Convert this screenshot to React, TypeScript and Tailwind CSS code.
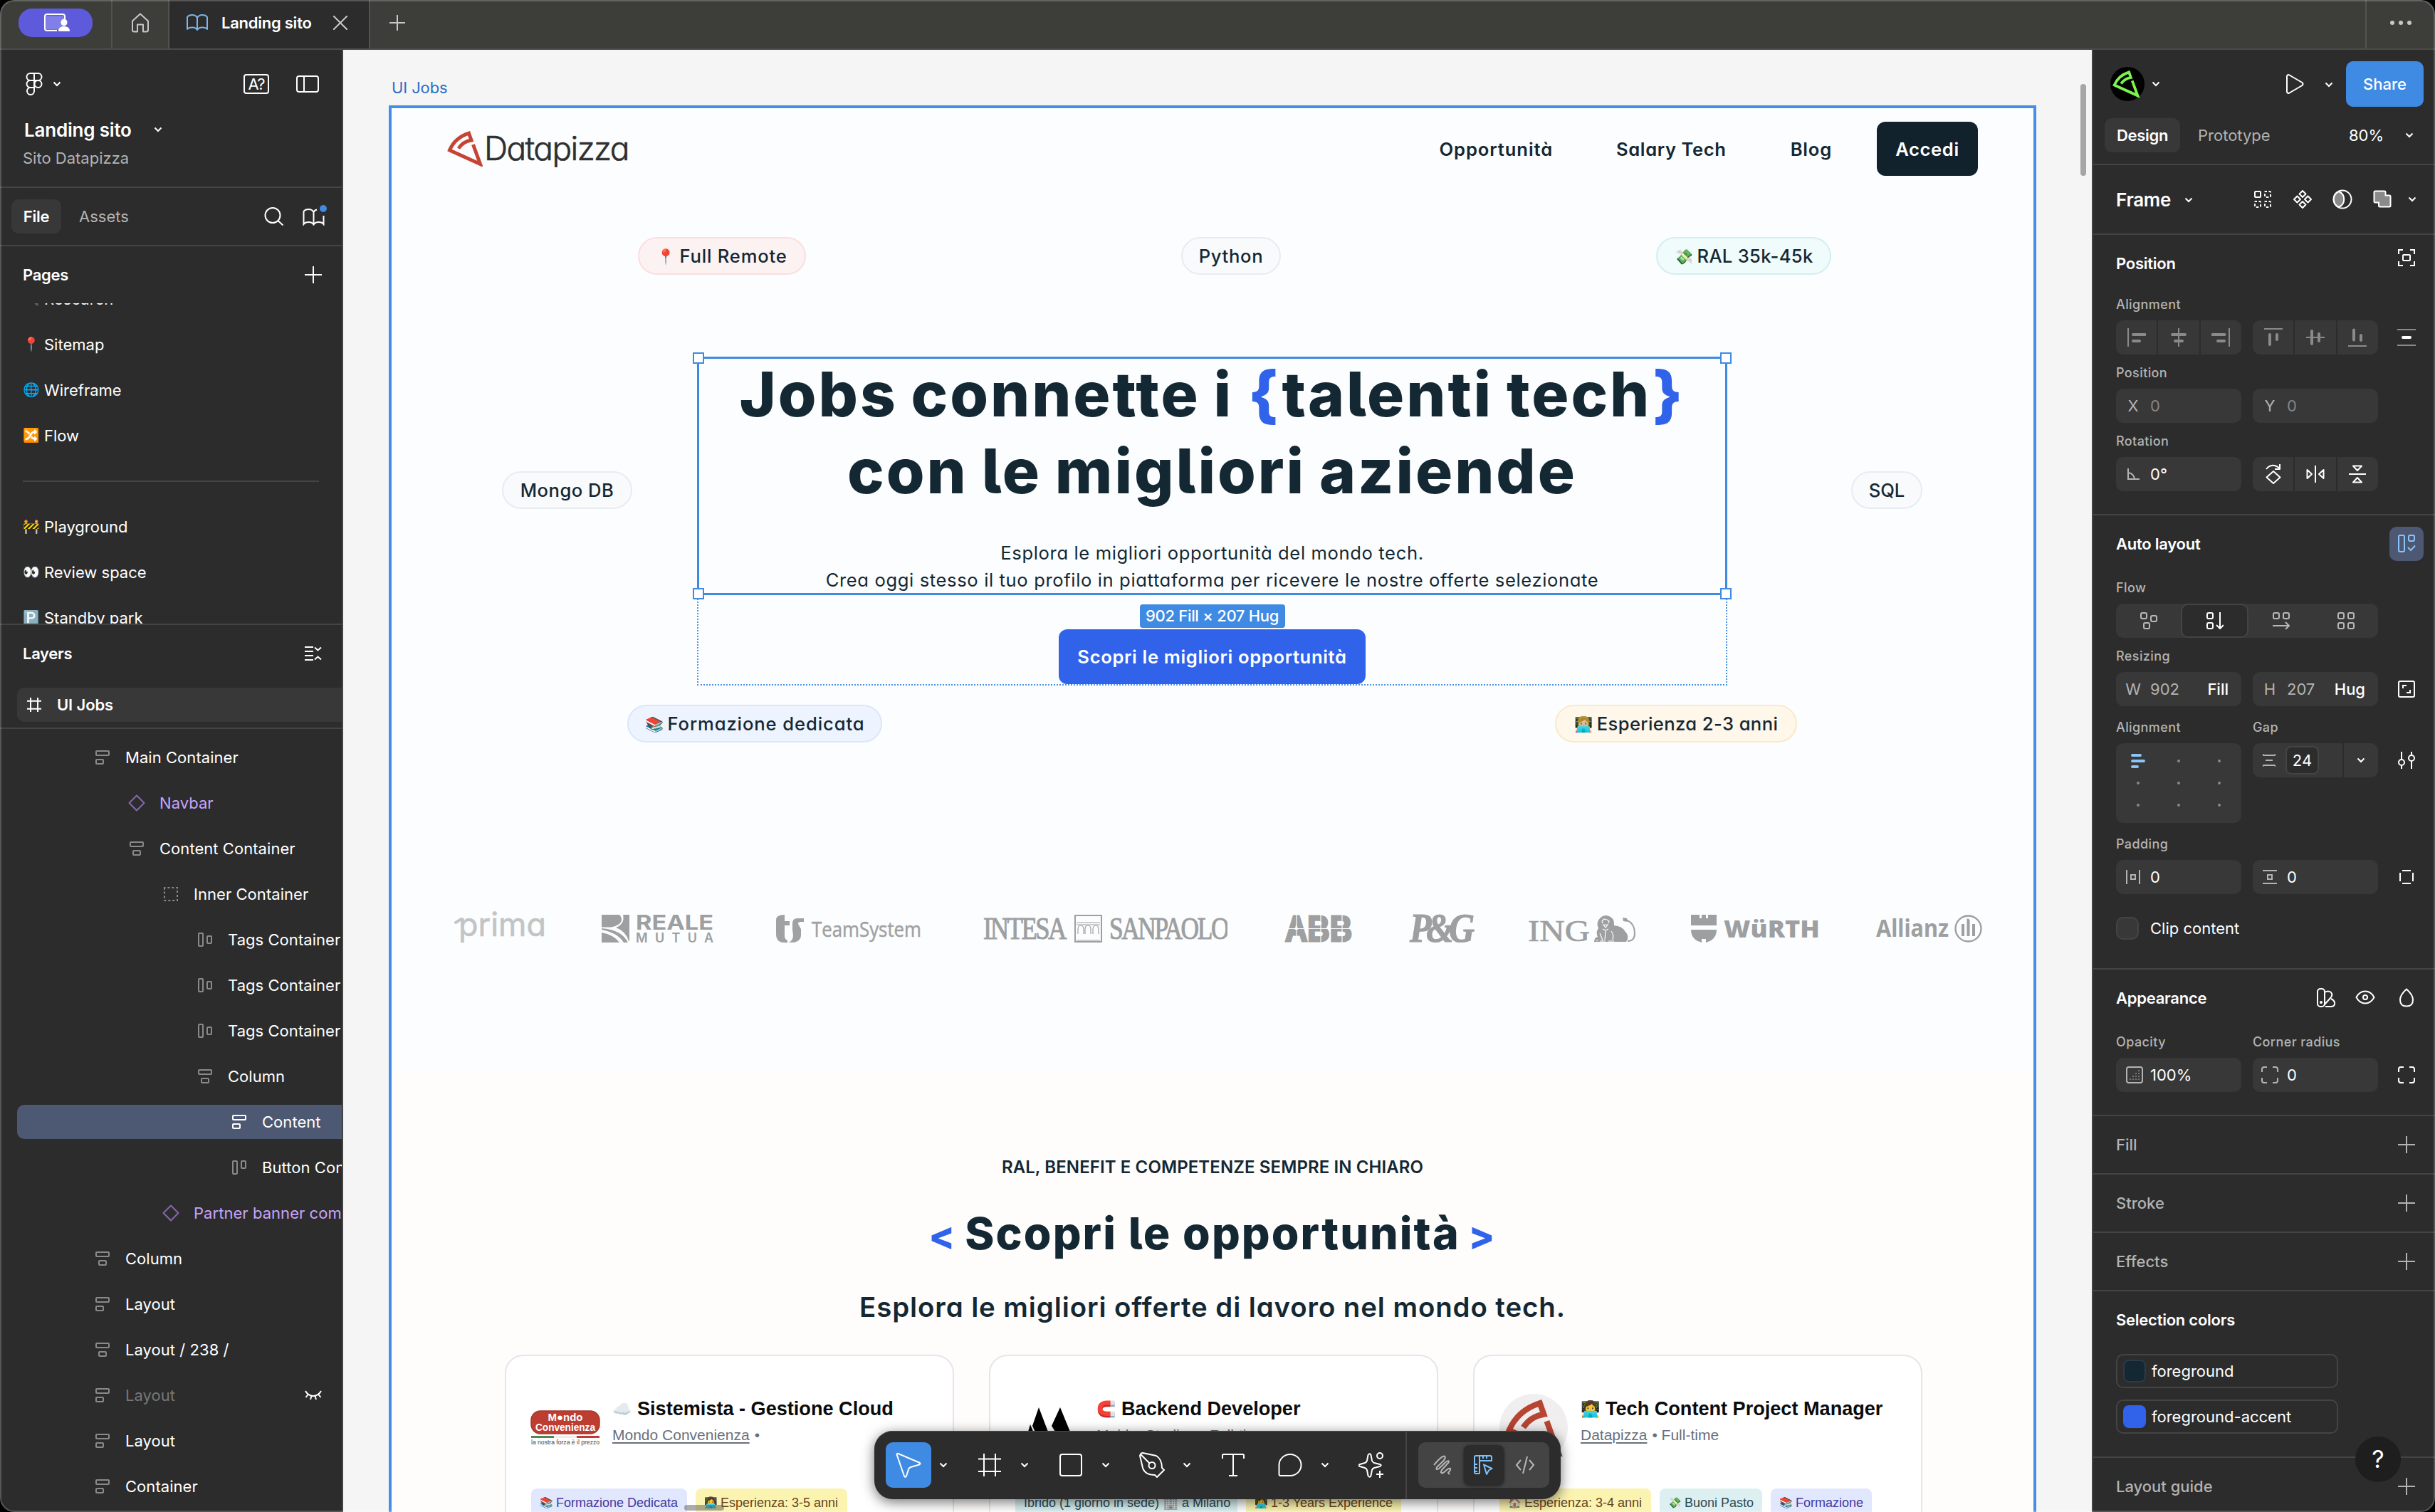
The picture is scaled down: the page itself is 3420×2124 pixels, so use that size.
import React from 'react';

type IconProps = { w: number; h: number; className?: string; sw?: number; children: React.ReactNode };

function Svg({ w, h, className = '', sw = 2, children }: IconProps) {
  return (
    <svg
      width={w}
      height={h}
      viewBox={`0 0 ${w} ${h}`}
      fill="none"
      stroke="currentColor"
      strokeWidth={sw}
      className={`shrink-0 ${className}`}
    >
      {children}
    </svg>
  );
}

const Chevron = ({ className = '' }: { className?: string }) => (
  <Svg w={12} h={8} className={className}>
    <path d="M1.5 1.5 6 6l4.5-4.5" />
  </Svg>
);

const Plus = ({ size = 24, className = '' }: { size?: number; className?: string }) => (
  <Svg w={size} h={size} className={className}>
    <path d={`M${size / 2} 0v${size}M0 ${size / 2}h${size}`} />
  </Svg>
);

const Hash = ({ size, className = '' }: { size: number; className?: string }) => (
  <svg width={size} height={size} viewBox="0 0 32 32" fill="none" stroke="currentColor" strokeWidth={size > 24 ? 2 : 3.2} className={`shrink-0 ${className}`}>
    <path d="M8 0v32M24 0v32M0 7.5h32M0 25h32" />
  </svg>
);

/* ---------------------------------------------------------------- top bar */

function TopBar() {
  return (
    <header className="flex h-[70px] shrink-0 items-stretch border-b-2 border-[#4b4b49] bg-[#3d3d3a] text-[#c8c8c6]">
      <div className="flex w-[156px] items-center pb-1 pl-[26px]">
        <div className="flex h-10 w-[104px] items-center justify-center rounded-[19px] bg-[#5d5bdc] text-white">
          <Svg w={38} h={26} className="ml-1">
            <rect x="3.5" y="3.5" width="25" height="19" fill="#8280e8" stroke="none" />
            <path d="M30 8V4q0-3-3-3H5Q2 1 2 4v17q0 3 3 3h14" />
            <ellipse cx="29" cy="12.500" rx="4.500" ry="5" fill="white" stroke="none" />
            <path d="M21 25q0-7 8-7t8 7z" fill="white" stroke="none" />
          </Svg>
        </div>
      </div>
      <div className="flex w-[82px] items-center justify-center border-x-2 border-[#52524f] pb-1">
        <Svg w={26} h={28}>
          <path d="M2 11.500 13 1.500l11 10V24q0 2.500-2.500 2.500H17v-10H9v10H4.500Q2 26.500 2 24z" strokeLinejoin="round" />
        </Svg>
      </div>
      <div className="flex w-[280px] items-center bg-[#2c2c2c] pb-1 pl-6">
        <Svg w={30} h={24} className="text-[#7fb5ec]">
          <path d="M15 5q-2-4-7-4T1 4v17q2-2.500 7-2.500t7 3.500q2-3.500 7-3.500t7 2.500V4q-2-3-7-3t-7 4zM15 5v17" strokeLinejoin="round" />
        </Svg>
        <span className="ml-[19px] text-[22px] font-semibold tracking-[-0.25px] text-white">Landing sito</span>
        <Svg w={20} h={20} className="ml-[30px]">
          <path d="M0 0l20 20M20 0 0 20" />
        </Svg>
      </div>
      <div className="flex flex-1 items-center border-l-2 border-[#52524f] pb-1 pl-[27px]">
        <Plus size={22} />
      </div>
      <div className="flex w-[98px] items-center gap-[6px] border-l-2 border-[#52524f] pb-1 pl-[33px]">
        <span className="size-[6px] rounded-full bg-[#c8c8c6]" />
        <span className="size-[6px] rounded-full bg-[#c8c8c6]" />
        <span className="size-[6px] rounded-full bg-[#c8c8c6]" />
      </div>
    </header>
  );
}

/* ----------------------------------------------------------- left sidebar */

type LayerKind = 'vleft' | 'vcenter' | 'hcenter' | 'htop' | 'group' | 'instance';

function LayerIcon({ kind }: { kind: LayerKind }) {
  if (kind === 'instance')
    return (
      <Svg w={24} h={24}>
        <path d="M12 1.500 22.500 12 12 22.500 1.500 12z" strokeLinejoin="round" />
      </Svg>
    );
  return (
    <Svg w={20} h={20}>
      {kind === 'vleft' && (<><rect x="1" y="1" width="18" height="6" rx="1" /><rect x="1" y="13" width="10" height="6" rx="1" /></>)}
      {kind === 'vcenter' && (<><rect x="1" y="1" width="18" height="6" rx="1" /><rect x="5" y="13" width="10" height="6" rx="1" /></>)}
      {kind === 'hcenter' && (<><rect x="1" y="1" width="6" height="18" rx="1" /><rect x="13" y="5" width="6" height="10" rx="1" /></>)}
      {kind === 'htop' && (<><rect x="1" y="1" width="6" height="18" rx="1" /><rect x="13" y="1" width="6" height="10" rx="1" /></>)}
      {kind === 'group' && <rect x="1" y="1" width="18" height="18" strokeDasharray="3 2.900" strokeDashoffset="1.500" />}
    </Svg>
  );
}

const INDENT = ['pl-[104px]', 'pl-[152px]', 'pl-[200px]', 'pl-[248px]', 'pl-[296px]'];

const LAYERS: { name: string; level: number; kind: LayerKind; selected?: boolean; hidden?: boolean }[] = [
  { name: 'Main Container', level: 0, kind: 'vleft' },
  { name: 'Navbar', level: 1, kind: 'instance' },
  { name: 'Content Container', level: 1, kind: 'vcenter' },
  { name: 'Inner Container', level: 2, kind: 'group' },
  { name: 'Tags Container', level: 3, kind: 'hcenter' },
  { name: 'Tags Container', level: 3, kind: 'hcenter' },
  { name: 'Tags Container', level: 3, kind: 'hcenter' },
  { name: 'Column', level: 3, kind: 'vcenter' },
  { name: 'Content', level: 4, kind: 'vleft', selected: true },
  { name: 'Button Container', level: 4, kind: 'htop' },
  { name: 'Partner banner component', level: 2, kind: 'instance' },
  { name: 'Column', level: 0, kind: 'vcenter' },
  { name: 'Layout', level: 0, kind: 'vleft' },
  { name: 'Layout / 238 /', level: 0, kind: 'vcenter' },
  { name: 'Layout', level: 0, kind: 'vleft', hidden: true },
  { name: 'Layout', level: 0, kind: 'vleft' },
  { name: 'Container', level: 0, kind: 'vleft' },
];

function Page({ emoji, name }: { emoji: string; name: string }) {
  return (
    <div className="flex h-16 items-center pl-8">
      <span className="w-[30px] text-[19px]">{emoji}</span>
      <span>{name}</span>
    </div>
  );
}

function LeftSidebar() {
  return (
    <aside className="flex w-[482px] shrink-0 flex-col overflow-hidden border-r-2 border-[#444] bg-[#2c2c2c] text-[22px] text-white">
      <div className="h-[194px] shrink-0 border-b-2 border-[#444] pt-6">
        <div className="flex h-12 items-center pl-9">
          <Svg w={24} h={32}>
            <path d="M12 1H6.500a5 5 0 0 0 0 10H12zM12 1h5.500a5 5 0 0 1 0 10H12zM12 11H6.500a5 5 0 0 0 0 10H12zM12 21H6.500a5 5 0 1 0 5.500 5z" />
            <circle cx="17.500" cy="16" r="5" />
          </Svg>
          <Chevron className="ml-[14px]" />
          <div className="ml-auto flex items-center pr-8">
            <div className="flex h-7 w-9 items-center justify-center rounded border-2 border-white text-[22px] leading-none tracking-[-1px]">A?</div>
            <Svg w={32} h={24} className="ml-[38px]">
              <rect x="1" y="1" width="30" height="22" rx="3" />
              <path d="M11 1v22" />
            </Svg>
          </div>
        </div>
        <div className="mt-4 flex h-12 items-center pl-[34px]">
          <span className="text-[26px] font-semibold tracking-[-0.2px]">Landing sito</span>
          <Chevron className="ml-[31px]" />
        </div>
        <div className="flex h-8 items-center pl-8 text-[#b3b3b3]">Sito Datapizza</div>
      </div>

      <div className="flex h-[82px] shrink-0 items-center border-b-2 border-[#444] pl-4 pr-6">
        <div className="flex h-12 w-[70px] items-center justify-center rounded-[10px] bg-[#383838] font-semibold tracking-[-0.3px]">File</div>
        <div className="ml-[25px] text-[#b3b3b3]">Assets</div>
        <Svg w={28} h={26} className="ml-auto">
          <circle cx="12" cy="11.500" r="10.500" />
          <path d="M19.500 19l7 6.500" />
        </Svg>
        <div className="relative ml-[26px] mt-[2px]">
          <Svg w={31} h={24}>
            <path d="M20 1.500q-3 .5-4.500 3.500Q13.500 1 8.500 1T1.500 4v18q2-3 7-3t7 3.500q2-3.500 7-3.500t7 3V10M15.500 5v17" />
          </Svg>
          <span className="absolute -right-[3px] -top-[5px] size-[10px] rounded-full bg-[#3f8ae2]" />
        </div>
      </div>

      <div className="flex h-20 shrink-0 items-center justify-between pl-8 pr-7">
        <span className="font-semibold tracking-[-0.3px]">Pages</span>
        <Plus />
      </div>
      <div className="h-[450px] shrink-0 overflow-hidden">
        <div className="-mt-[38px] flex flex-col">
          <Page emoji="🔍" name="Research" />
          <Page emoji="📍" name="Sitemap" />
          <Page emoji="🌐" name="Wireframe" />
          <Page emoji="🔀" name="Flow" />
          <div className="mx-8 flex h-16 items-center">
            <div className="h-[2px] w-full bg-[#444]" />
          </div>
          <Page emoji="🚧" name="Playground" />
          <Page emoji="👀" name="Review space" />
          <Page emoji="🅿️" name="Standby park" />
        </div>
      </div>

      <div className="shrink-0 border-y-2 border-[#444] pb-2">
        <div className="flex h-20 items-center justify-between pl-8 pr-7">
          <span className="font-semibold tracking-[-0.3px]">Layers</span>
          <Svg w={24} h={20}>
            <path d="M0 1h12M0 7h12M0 13h12M0 19h12M14 1.500l4.500 4 4.500-4M14 18.500l4.500-4 4.500 4" />
          </Svg>
        </div>
        <div className="ml-6 mt-2 flex h-12 items-center rounded-l-[10px] bg-[#383838] pl-[14px]">
          <Hash size={20} />
          <span className="ml-[22px] font-semibold tracking-[-0.1px]">UI Jobs</span>
        </div>
      </div>

      <div className="flex flex-col pt-2">
        {LAYERS.map((l, i) => (
          <div key={i} className="flex h-16 items-center pl-6">
            <div
              className={`flex h-12 min-w-0 flex-1 items-center overflow-hidden rounded-l-[10px] ${INDENT[l.level]} ${
                l.selected ? 'bg-[#4d5872]' : ''
              }`}
            >
              <span
                className={`flex w-8 shrink-0 justify-center ${
                  l.selected ? 'text-white' : l.kind === 'instance' ? 'text-[#8768ad]' : 'text-[#8a8a8a]'
                }`}
              >
                <LayerIcon kind={l.kind} />
              </span>
              <span
                className={`ml-4 whitespace-nowrap tracking-[0.05px] ${
                  l.kind === 'instance' ? 'text-[#c8a4f8]' : l.hidden ? 'text-[#777]' : 'text-white'
                }`}
              >
                {l.name}
              </span>
              {l.hidden && (
                <Svg w={24} h={14} className="ml-auto mr-7">
                  <path d="M1 1q4 7 11 7t11-7M5 5.500 1.500 10M9.500 8 8 13M14.500 8l1.500 5M19 5.500l3.500 4.500" />
                </Svg>
              )}
            </div>
          </div>
        ))}
      </div>
    </aside>
  );
}

/* ----------------------------------------------------------------- canvas */

/* Datapizza slice: outer crust, inner arc and the right edge. */
function Slice({ width, height, className = '', sw = 5 }: { width: number; height: number; className?: string; sw?: number }) {
  return (
    <svg width={width} height={height} viewBox="0 0 50 50" fill="none" stroke="currentColor" strokeWidth={sw} className={`shrink-0 ${className}`}>
      <path d="M16 24.500Q22 15 34 13L30.500 3.200Q11 9.500 3.500 27L46.500 46.500 36.500 19" strokeMiterlimit="8" />
    </svg>
  );
}

function Pill({ emoji, children, className }: { emoji?: string; children: string; className: string }) {
  return (
    <div className={`flex h-[53px] shrink-0 items-center justify-center rounded-full border-2 pt-[2px] text-[25.6px] font-medium ${className}`}>
      {emoji && <span className="mr-[6px] w-[26px] text-[21px]">{emoji}</span>}
      <span>{children}</span>
    </div>
  );
}

function Partners() {
  return (
    <div className="mt-[232px] flex h-[60px] items-center pl-[88px]">
      <svg width="129" height="42" viewBox="0 0 129 42" className="shrink-0 overflow-visible" fill="#c3c4c5" stroke="#c3c4c5">
        <text x="6" y="31" fontFamily="Inter" fontWeight="400" fontSize="46" textLength="123" lengthAdjust="spacingAndGlyphs" strokeWidth=".6" className="[font-feature-settings:'cv11']">prima</text>
        <path d="M2 12 10 7" strokeWidth="4" strokeLinecap="round" />
      </svg>
      <svg width="157" height="42" viewBox="0 0 157 42" fill="#9d9fa1" className="ml-[78px] shrink-0">
        <path d="M0 1h25q7 8-2 14-4 3-10 3.500H0zM30 1h9v37h-1Q34 24 20 19q13-5 10-18zM0 20q28 2 37 20h-6Q22 26 0 22zM0 26q17 3 25 14H0z" />
        <text x="48" y="22" fontFamily="Inter" fontWeight="700" fontSize="29" textLength="109" lengthAdjust="spacingAndGlyphs">REALE</text>
        <text x="48" y="40" fontFamily="Inter" fontWeight="600" fontSize="18" textLength="109">MUTUA</text>
      </svg>
      <svg width="204" height="42" viewBox="0 0 204 42" fill="#a0a1a1" className="ml-[88px] shrink-0">
        <path d="M12 1v9h7v6h-7v15q0 4 4 6v3Q0 42 0 28V8q0-7 12-7zM39 6v5h-5q-3 0-3 3l4 7v8q0 12-17 11 6-3 6-10l-1-8V13q0-7 7-7z" />
        <text x="50" y="32" fontFamily="Open Sans" fontSize="29" stroke="#a0a1a1" strokeWidth=".5" textLength="154" lengthAdjust="spacingAndGlyphs">TeamSystem</text>
      </svg>
      <svg width="343" height="42" viewBox="0 0 343 42" fill="#9d9fa1" stroke="#9d9fa1" strokeWidth="1" className="ml-[87px] shrink-0">
        <text x="0" y="35" fontFamily="Liberation Serif" fontSize="44" letterSpacing="-3" textLength="115" lengthAdjust="spacingAndGlyphs">INTESA</text>
        <g fill="none" strokeWidth="2"><rect x="129" y="2" width="37" height="37" /><path d="M131 12h33M131 15h33" strokeWidth="1" /><path d="M133 28v-6q0-6 4-6t4 6v6M143 28v-6q0-6 4-6t4 6v6M154 28v-6q0-6 4-6t4 6v6M131 37h33" strokeWidth="1.200" /></g>
        <text x="177" y="35" fontFamily="Liberation Serif" fontSize="44" letterSpacing="-3" textLength="166" lengthAdjust="spacingAndGlyphs">SANPAOLO</text>
      </svg>
      <svg width="95" height="42" viewBox="0 0 95 42" fill="#9d9fa1" stroke="#9d9fa1" strokeWidth="3" className="ml-20 shrink-0">
        <text x="1" y="38" fontFamily="Liberation Sans" fontWeight="700" fontSize="50" textLength="94" lengthAdjust="spacingAndGlyphs">ABB</text>
        <path d="M0 20.500h95M17 0v42M51 0v42M81 0v42" stroke="#fcfdfe" strokeWidth="1.200" />
      </svg>
      <svg width="88" height="42" viewBox="0 0 88 42" fill="#9d9fa1" stroke="#9d9fa1" strokeWidth="1.200" className="ml-20 shrink-0 overflow-visible">
        <text x="1" y="39" fontFamily="Liberation Serif" fontStyle="italic" fontWeight="700" fontSize="56" letterSpacing="-8" textLength="84" lengthAdjust="spacingAndGlyphs">P&amp;G</text>
      </svg>
      <svg width="152" height="42" viewBox="0 0 152 42" fill="#9d9fa1" className="ml-[79px] shrink-0 overflow-visible">
        <text x="0" y="38" fontFamily="Liberation Serif" fontSize="42" stroke="#9d9fa1" strokeWidth=".6" textLength="87" lengthAdjust="spacingAndGlyphs">ING</text>
        <path d="M93 39q0-6 5-7-3-7 1-12-4-9 3-15 5-5 12-2 8 3 7 13 12 1 16 9 4 4 3 10l-2 4z" />
        <path d="M137 8q13 4 13 19 0 11-10 11" fill="none" stroke="#9d9fa1" strokeWidth="2" />
        <path d="m133 5 6 1 1 5-6-1z" />
        <path d="M104 10l3-3 4 1 3 2-1 3M104 10l1 3M106 15h6l-3 4zM105 21l4 2 4-2M101 27l4 10M109 24l-1 12M117 24q4 5 2 12M96 37h2M101 38h8M113 38h8" fill="none" stroke="#fcfdfe" strokeWidth="1.200" />
      </svg>
      <svg width="181" height="42" viewBox="0 0 181 42" fill="#9d9fa1" className="ml-[77px] shrink-0">
        <path d="M0 1h12v5h3V1h6v5h3V1h12v15H0zM0 22h36q0 14-15 18v-5h-6v5Q0 36 0 22z" />
        <text x="46" y="33" fontFamily="Open Sans" fontWeight="800" fontSize="34" textLength="135" lengthAdjust="spacingAndGlyphs">WüRTH</text>
      </svg>
      <svg width="149" height="42" viewBox="0 0 149 42" fill="#9d9fa1" className="ml-[79px] shrink-0">
        <text x="0" y="32" fontFamily="Noto Sans" fontWeight="700" fontSize="34" textLength="102" lengthAdjust="spacingAndGlyphs">Allianz</text>
        <circle cx="129.500" cy="20.500" r="18" fill="none" stroke="#9d9fa1" strokeWidth="2.400" />
        <path d="M122 14v17M129.500 8v23M127.500 8.500h3M137 14v17" fill="none" stroke="#9d9fa1" strokeWidth="4" />
      </svg>
    </div>
  );
}

function Handle({ className }: { className: string }) {
  return <span className={`absolute size-4 border-2 border-[#3f8ae2] bg-white ${className}`} />;
}

function Tag({ emoji, children, className }: { emoji?: string; children: string; className: string }) {
  return (
    <div className={`flex h-10 items-center whitespace-nowrap rounded-lg pl-3 text-[18px] ${className}`}>
      {emoji && <span className="mr-[3px] w-5 text-[15px]">{emoji}</span>}
      <span>{children}</span>
    </div>
  );
}

function JobCard({
  logo, emoji, title, company, suffix, children,
}: { logo: React.ReactNode; emoji: string; title: string; company: string; suffix: string; children: React.ReactNode }) {
  return (
    <article className="h-[420px] w-[631px] shrink-0 rounded-[26px] border-2 border-[#e5e5ea] bg-white px-[35px] pt-[53px] font-['Liberation_Sans',sans-serif]">
      <div className="flex h-24">
        <div className="flex h-24 w-24 shrink-0 items-center justify-center">{logo}</div>
        <div className="ml-[18px] pt-[4px]">
          <div className="flex h-[34px] items-center whitespace-nowrap text-[27.100px] font-bold text-[#0b0b0c]">
            <span className="mr-[7px] w-7 text-[22px]">{emoji}</span>
            {title}
          </div>
          <div className="mt-[3px] flex h-[34px] items-center whitespace-nowrap text-[21px] text-[#696f7d]">
            <span className="underline underline-offset-[3px]">{company}</span>
            <span className="ml-[7px]">{suffix}</span>
          </div>
        </div>
      </div>
      <div className="mt-[37px] flex gap-3">{children}</div>
    </article>
  );
}

function Frame() {
  return (
    <div className="absolute left-16 top-[78px] w-[2314px] border-4 border-[#438fe6] bg-[#fcfdfe] text-[#142833] [font-feature-settings:'cv11']">
      <section className="h-[1352px]">
        <nav className="flex h-[95px] items-center pl-[78px] pr-[78px] pt-[19px] text-[25.6px] font-semibold">
          <Slice width={50} height={50} className="text-[#c64434]" />
          <span className="ml-[2px] mt-[-2px] text-[46px] font-light leading-none tracking-[-1.6px] text-[#2e3030] [-webkit-text-stroke:0.6px_#2e3030]">Datapizza</span>
          <span className="ml-auto pt-[2px] tracking-[0.9px]">Opportunità</span>
          <span className="ml-[89px] pt-[2px] tracking-[0.6px]">Salary Tech</span>
          <span className="ml-[90px] pt-[2px] tracking-[0.8px]">Blog</span>
          <span className="ml-[63px] flex h-[76px] w-[142px] items-center justify-center rounded-xl bg-[#12222d] pt-[2px] tracking-[0.6px] text-white">Accedi</span>
        </nav>

        <div className="mt-[86px] flex justify-between pl-[346px] pr-[284px]">
          <Pill emoji="📍" className="w-[236px] border-[#f9dfe0] bg-[#fdf2f2] tracking-[0.8px]">Full Remote</Pill>
          <Pill className="w-[140px] border-[#e8ecf1] bg-[#f8fafc] tracking-[0.7px]">Python</Pill>
          <Pill emoji="💸" className="w-[246px] border-[#d3eff0] bg-[#f0fbfb] tracking-[0.3px]">RAL 35k-45k</Pill>
        </div>

        <div className="mt-[115px] flex pl-[155px]">
          <Pill className="mt-[161px] w-[183px] border-[#e8ecf1] bg-[#f8fafc] tracking-[0.5px]">Mongo DB</Pill>
          <div className="relative ml-[91px] flex h-[462px] w-[1447px] flex-col items-center border-2 border-dotted border-[#4b93e6]">
            <div className="absolute -inset-x-[2px] -top-[2px] h-[335px] border-[3px] border-[#3f8ae2]">
              <Handle className="-left-[9px] -top-[9px]" />
              <Handle className="-right-[9px] -top-[9px]" />
              <Handle className="-bottom-[9px] -left-[9px]" />
              <Handle className="-bottom-[9px] -right-[9px]" />
            </div>
            <h1 className="-mt-[3px] whitespace-nowrap text-center text-[87px] font-extrabold leading-[107.500px] tracking-[2.9px] [font-feature-settings:'cv05'] [word-spacing:-3px]">
              Jobs connette i <span className="pl-[2px] tracking-[5px] text-[#3063e9]">{'{'}</span>talenti tech<span className="pl-[2px] text-[#3063e9]">{'}'}</span>
              <br />
              con le migliori aziende
            </h1>
            <p className="mt-[43px] whitespace-nowrap text-center text-[25.6px] leading-[38.400px] tracking-[0.62px]">
              Esplora le migliori opportunità del mondo tech.
              <br />
              Crea oggi stesso il tuo profilo in piattaforma per ricevere le nostre offerte selezionate
            </p>
            <div className="mt-[14px] flex h-[34px] w-[204px] items-center justify-center rounded bg-[#3f8ae2] text-[22px] font-medium tracking-[-0.3px] text-white [font-feature-settings:normal]">
              902 Fill × 207 Hug
            </div>
            <div className="mt-[2px] flex h-[77px] w-[431px] shrink-0 items-center justify-center rounded-xl bg-[#3063e9] pt-[2px] text-[25.6px] font-semibold tracking-[0.65px] text-white">
              Scopri le migliori opportunità
            </div>
          </div>
          <Pill className="ml-[174px] mt-[161px] w-[100px] border-[#e8ecf1] bg-[#f8fafc]">SQL</Pill>
        </div>

        <div className="mt-[27px] flex justify-between pl-[331px] pr-[332px]">
          <Pill emoji="📚" className="w-[358px] border-[#dbe6fb] bg-[#eef4ff] tracking-[0.9px]">Formazione dedicata</Pill>
          <Pill emoji="👩🏼‍💻" className="w-[340px] border-[#fbe9c9] bg-[#fff7ea] tracking-[0.4px]">Esperienza 2-3 anni</Pill>
        </div>

        <Partners />
      </section>

      <section className="flex flex-col items-center bg-[#fefdfc] pt-[118px]">
        <p className="h-9 text-[24px] font-semibold leading-9 tracking-[0.1px]">RAL, BENEFIT E COMPETENZE SEMPRE IN CHIARO</p>
        <h2 className="mt-[34px] h-20 whitespace-nowrap text-[62.500px] font-extrabold leading-[80px] tracking-[2.1px] [font-feature-settings:'cv05']">
          <span className="-mr-[4px] text-[54px] text-[#3063e9]">&lt;</span> Scopri le opportunità <span className="-ml-[4px] text-[54px] text-[#3063e9]">&gt;</span>
        </h2>
        <p className="mt-9 h-14 text-[38.400px] font-semibold leading-[56px] tracking-[0.92px]">Esplora le migliori offerte di lavoro nel mondo tech.</p>
        <div className="mt-[39px] flex w-full gap-[49px] pl-[159px] [font-feature-settings:normal]">
          <JobCard
            emoji="☁️" title="Sistemista - Gestione Cloud" company="Mondo Convenienza" suffix="•"
            logo={
              <svg width="98" height="50" viewBox="0 0 98 50" className="shrink-0">
                <rect x="1" y="1" width="96" height="32" rx="13" fill="#bd3d31" stroke="#a33a30" strokeWidth="1.500" />
                <g fontFamily="Liberation Sans" fontWeight="700" fill="#fff" textAnchor="middle">
                  <text x="49" y="15" fontSize="15">M●ndo</text>
                  <text x="49" y="28.500" fontSize="15" textLength="84" lengthAdjust="spacingAndGlyphs">Convenienza</text>
                  <text x="49" y="48" fontSize="9" fontWeight="400" fill="#444" textLength="96" lengthAdjust="spacingAndGlyphs">la nostra forza è il prezzo</text>
                </g>
                <path d="M1 37.500h32" stroke="#4f8a52" strokeWidth="3" />
                <path d="M33 37.500h32" stroke="#eee" strokeWidth="3" />
                <path d="M65 37.500h32" stroke="#bd3d31" strokeWidth="3" />
              </svg>
            }
          >
            <Tag emoji="📚" className="w-[219px] bg-[#e1e7fd] text-[#4338a0]">Formazione Dedicata</Tag>
            <Tag emoji="👩‍💻" className="w-[213px] bg-[#fbf3b0] text-[#66431f]">Esperienza: 3-5 anni</Tag>
          </JobCard>
          <JobCard
            emoji="🧲" title="Backend Developer" company="Mohka Studios" suffix="• Full-time"
            logo={
              <svg width="66" height="58" viewBox="0 0 66 58" className="shrink-0">
                <path d="M18 0 40 58H24L9 26ZM48 0 66 44v14H56L36 26ZM6 24 20 58H-4Z" />
              </svg>
            }
          >
            <Tag className="w-[312px] bg-[#d8efef] text-[#2c4a52]">Ibrido (1 giorno in sede) 🏢 a Milano</Tag>
            <Tag emoji="👩‍💻" className="w-[218px] bg-[#fbf3b0] text-[#66431f]">1-3 Years Experience</Tag>
          </JobCard>
          <JobCard
            emoji="👩‍💻" title="Tech Content Project Manager" company="Datapizza" suffix="• Full-time"
            logo={
              <div className="flex size-24 items-center justify-center rounded-full bg-[#f0eeef]">
                <Slice width={88} height={80} sw={5} className="text-[#b84432]" />
              </div>
            }
          >
            <Tag emoji="🏠" className="w-[213px] bg-[#fbf3b0] text-[#66431f]">Esperienza: 3-4 anni</Tag>
            <Tag emoji="💸" className="w-[144px] bg-[#dcf0f2] text-[#2c4a52]">Buoni Pasto</Tag>
            <Tag emoji="📚" className="w-[142px] bg-[#e1e7fd] text-[#4338a0]">Formazione</Tag>
          </JobCard>
        </div>
      </section>
    </div>
  );
}

function ToolButton({ children, active = false }: { children: React.ReactNode; active?: boolean }) {
  return <div className={`flex size-16 items-center justify-center rounded-[10px] ${active ? 'bg-[#3f8ae2]' : ''}`}>{children}</div>;
}

function ToolChevron() {
  return (
    <div className="mr-4 flex w-[34px] items-center justify-center">
      <Chevron />
    </div>
  );
}

function Toolbar() {
  return (
    <div className="absolute left-[746px] top-[1940px] flex h-24 w-[964px] items-center rounded-[26px] bg-[#2c2c2c] pl-4 text-white shadow-[0_4px_18px_rgba(0,0,0,0.55),inset_0_1px_0_#4a4a4a]">
      <ToolButton active>
        <Svg w={36} h={36}>
          <path d="M3.500 2 33 14.500q3 1.600 0 3L21 21q-2 .7-2.800 2.500L15 33.500q-1.400 2.700-3 0L1.800 4Q1.200 1 3.500 2z" strokeLinejoin="round" />
        </Svg>
      </ToolButton>
      <ToolChevron />
      <ToolButton><Hash size={32} /></ToolButton>
      <ToolChevron />
      <ToolButton>
        <Svg w={32} h={32}><rect x="1" y="1" width="30" height="30" rx="3" /></Svg>
      </ToolButton>
      <ToolChevron />
      <ToolButton>
        <Svg w={38} h={36}>
          <path d="M2 5q1-4 4-4l19 4q8 5 8 17l3 3-10 10-3-3Q9 32 6 22zM3 3l13 13" strokeLinejoin="round" />
          <circle cx="19" cy="18.500" r="4.500" />
        </Svg>
      </ToolButton>
      <ToolChevron />
      <ToolButton>
        <Svg w={32} h={32}><path d="M1 7V2.500Q1 1 2.500 1h27Q31 1 31 2.500V7M16 1v30M10 31h12" /></Svg>
      </ToolButton>
      <div className="w-4" />
      <ToolButton>
        <Svg w={34} h={32}><path d="M1.500 29V16a15.500 15 0 1 1 15.500 15H3.500q-2 0-2-2z" /></Svg>
      </ToolButton>
      <ToolChevron />
      <ToolButton>
        <Svg w={36} h={36}>
          <path d="M13.500 4q2.500-3.500 4 0l1.500 8q.8 2 3 3l8 2q3.500 1 0 3l-8 2q-2 .8-3 3l-1.500 8q-1.500 3.500-4 0l-1.500-8q-.8-2-3-3l-7-2q-3.500-1.500 0-3l7-2q2-.8 3-3z" />
          <circle cx="30" cy="5" r="4" />
          <path d="M30 26v10M25 31h10" />
        </Svg>
      </ToolButton>
      <div className="ml-4 h-24 w-[2px] bg-[#444]" />
      <div className="ml-4 flex h-16 w-[184px] items-center rounded-[10px] bg-[#444] p-1 text-[#b8b8b8]">
        <div className="flex flex-1 justify-center">
          <Svg w={27} h={28}>
            <path d="M1 14Q11 2 15 1.500q4 1-1 7L5 17q-2 5 3 2L18 9.500q5-3 3.500 1L12 21q-3 5 2 4l6-5q5-3 4 1l-3 4 2 2" strokeLinejoin="round" />
          </Svg>
        </div>
        <div className="flex h-14 w-14 items-center justify-center rounded-lg bg-[#2c2c2c] text-[#7cc0fb] shadow-[0_1px_4px_rgba(0,0,0,0.6)]">
          <Svg w={28} h={28}>
            <path d="M8 26H3q-2 0-2-2V3q0-2 2-2h20q2 0 2 2v5H8v18M8 8V1M13 2v3M18 2v3M2 13h3M2 18h3M2 23h3" strokeLinejoin="round" />
            <path d="M14 13.500l11.500 5.500-4.500 2.500-3 5.500z" strokeLinejoin="round" />
          </Svg>
        </div>
        <div className="flex flex-1 justify-center">
          <Svg w={28} h={24}><path d="M8 5 2 12l6 7M20 5l6 7-6 7M17 0l-6 24" /></Svg>
        </div>
      </div>
    </div>
  );
}

function Canvas() {
  return (
    <main className="relative min-w-0 flex-1 overflow-hidden bg-[#f5f5f5]">
      <div className="absolute left-[68px] top-[39px] text-[22px] leading-[28px] tracking-[-0.1px] text-[#2f6fc4]">UI Jobs</div>
      <Frame />
      <div className="absolute right-2 top-12 h-[129px] w-2 rounded-full bg-[#a6a6a6]" />
      <div className="absolute left-[479px] top-[2044px] h-2 w-14 rounded-full bg-[#5a5a5a]/50" />
      <Toolbar />
    </main>
  );
}

/* ---------------------------------------------------------- right sidebar */

function Label({ children, className = 'h-12 pt-[3px]' }: { children: string; className?: string }) {
  return <div className={`flex w-[192px] items-center text-[18px] font-medium tracking-[0.4px] text-[#b3b3b3] ${className}`}>{children}</div>;
}

function Title({ children, icons, className = 'h-[76px] pt-1' }: { children: string; icons?: React.ReactNode; className?: string }) {
  return (
    <div className={`flex items-center justify-between ${className}`}>
      <span className="font-semibold tracking-[-0.25px]">{children}</span>
      {icons}
    </div>
  );
}

function Field({ icon, value, suffix, muted }: { icon: React.ReactNode; value: string; suffix?: string; muted?: string }) {
  return (
    <div className="flex h-12 w-44 items-center rounded-[10px] bg-[#383838]">
      <span className="flex w-12 shrink-0 justify-center text-[#b3b3b3]">{icon}</span>
      <span className={muted ?? 'text-white'}>{value}</span>
      {suffix && <span className="ml-auto pr-[18px] font-medium">{suffix}</span>}
    </div>
  );
}

function Segments({ items, className = '' }: { items: React.ReactNode[]; className?: string }) {
  return (
    <div className={`flex h-12 w-44 gap-[2px] overflow-hidden rounded-[10px] ${className}`}>
      {items.map((it, i) => (
        <div key={i} className="flex flex-1 items-center justify-center bg-[#383838]">{it}</div>
      ))}
    </div>
  );
}

const Side = ({ children }: { children: React.ReactNode }) => <div className="flex size-12 items-center justify-center">{children}</div>;

const Corners = () => (
  <Svg w={24} h={24}>
    <path d="M8 1H4Q1 1 1 4v4M16 1h4q3 0 3 3v4M8 23H4q-3 0-3-3v-4M16 23h4q3 0 3-3v-4" />
  </Svg>
);

function AddRow({ children }: { children: string }) {
  return (
    <div className="flex h-[82px] items-center justify-between border-b-2 border-[#444] pl-8 pr-7 text-[#b3b3b3]">
      <span className="font-medium">{children}</span>
      <Plus />
    </div>
  );
}

function RightSidebar() {
  return (
    <aside className="relative flex w-[482px] shrink-0 flex-col overflow-hidden border-l-2 border-[#444] bg-[#2c2c2c] text-[22px] text-white">
      <div className="h-[162px] shrink-0 border-b-2 border-[#444] pt-4">
        <div className="flex h-16 items-center pl-6 pr-4">
          <div className="flex size-12 items-center justify-center rounded-full bg-black">
            <Slice width={38} height={40} className="-ml-1 text-[#7bf54b]" />
          </div>
          <Chevron className="ml-[10px]" />
          <Svg w={26} h={28} className="ml-auto">
            <path d="M2 3.500q0-3.500 3.500-2l18 10.500q2 2 0 4l-18 10.500q-3.500 1.500-3.500-2z" strokeLinejoin="round" />
          </Svg>
          <Chevron className="ml-[29px] mt-[2px]" />
          <div className="ml-[18px] flex h-16 w-[109px] items-center justify-center rounded-[10px] bg-[#3f8ae2] font-medium">Share</div>
        </div>
        <div className="mt-4 flex h-12 items-center pl-4 pr-[30px]">
          <div className="flex h-12 w-[106px] items-center justify-center rounded-[10px] bg-[#383838] font-semibold tracking-[-0.3px]">Design</div>
          <span className="ml-[25px] text-[#b3b3b3]">Prototype</span>
          <span className="ml-auto">80%</span>
          <Chevron className="ml-[30px]" />
        </div>
      </div>

      <div className="flex h-[98px] shrink-0 items-center border-b-2 border-[#444] pl-8 pr-[26px]">
        <span className="text-[26px] font-semibold tracking-[-0.3px]">Frame</span>
        <Chevron className="ml-[19px] mt-[2px]" />
        <Svg w={24} h={24} className="ml-auto">
          <rect x="1" y="1" width="8" height="8" rx="1" />
          <g strokeDasharray="3.500 2.500" strokeDashoffset="1.500"><rect x="15" y="1" width="8" height="8" rx="1" /><rect x="1" y="15" width="8" height="8" rx="1" /><rect x="15" y="15" width="8" height="8" rx="1" /></g>
        </Svg>
        <Svg w={28} h={28} className="ml-[30px]">
          <path d="m14 2 4.500 4.500L14 11 9.500 6.500zM14 17l4.500 4.500L14 26l-4.500-4.500zM6.500 9.500 11 14l-4.500 4.500L2 14zM21.500 9.500 26 14l-4.500 4.500L17 14z" strokeLinejoin="round" />
        </Svg>
        <Svg w={28} h={28} className="ml-7">
          <circle cx="14" cy="14" r="12.500" />
          <path d="M9 3a12 12 0 0 1 0 22A12 12 0 0 1 9 3z" fill="#8a8a8a" />
        </Svg>
        <Svg w={26} h={26} className="ml-[29px]">
          <path d="M1.500 3q0-1.500 1.500-1.500h13q1.500 0 1.500 1.500v4.500H23q1.500 0 1.500 1.500v13q0 1.500-1.500 1.500H9.500q-1.500 0-1.500-1.500v-4.500H3q-1.500 0-1.500-1.500z" fill="#8a8a8a" />
        </Svg>
        <Chevron className="ml-[23px]" />
      </div>

      <div className="h-[394px] shrink-0 border-b-2 border-[#444] pl-8 pr-4">
        <Title
          className="h-[72px] pt-2"
          icons={
            <div className="-mt-4 mr-3">
              <Svg w={24} h={24}>
                <path d="M1 7V1h6M17 1h6v6M1 17v6h6M23 17v6h-6" />
                <rect x="7" y="8" width="10" height="8" rx="1" />
              </Svg>
            </div>
          }
        >
          Position
        </Title>
        <Label>Alignment</Label>
        <div className="flex gap-4">
          <Segments
            className="text-[#8a8a8a]"
            items={[
              <Svg w={26} h={26}><path d="M1 0v26" /><path d="M8 9h17M8 18h9" strokeWidth="4" strokeLinecap="round" /></Svg>,
              <Svg w={24} h={26}><path d="M12 0v26" /><path d="M3 9h18M7 18h10" strokeWidth="4" strokeLinecap="round" /></Svg>,
              <Svg w={26} h={26}><path d="M25 0v26" /><path d="M1.500 9h17M9 18h9" strokeWidth="4" strokeLinecap="round" /></Svg>,
            ]}
          />
          <Segments
            className="text-[#8a8a8a]"
            items={[
              <Svg w={26} h={26}><path d="M0 1h26" /><path d="M8 9v14M18 9v7" strokeWidth="4" strokeLinecap="round" /></Svg>,
              <Svg w={26} h={26}><path d="M0 13h26" /><path d="M8 4v18M18 8v10" strokeWidth="4" strokeLinecap="round" /></Svg>,
              <Svg w={26} h={26}><path d="M0 25h26" /><path d="M8 2.500v14M18 10v7" strokeWidth="4" strokeLinecap="round" /></Svg>,
            ]}
          />
          <Side>
            <Svg w={26} h={24}>
              <path d="M0 1h26M0 23h26" stroke="#8a8a8a" />
              <path d="M8 12h10" strokeWidth="4" strokeLinecap="round" />
            </Svg>
          </Side>
        </div>
        <Label>Position</Label>
        <div className="flex gap-4">
          <Field icon="X" value="0" muted="text-[#858585]" />
          <Field icon="Y" value="0" muted="text-[#858585]" />
        </div>
        <Label>Rotation</Label>
        <div className="flex gap-4">
          <Field icon={<Svg w={18} h={18}><path d="M2 1v15h16M2 7q8 1 9 9" /></Svg>} value="0°" />
          <Segments
            items={[
              <Svg w={26} h={30}><path d="m13 11 9.500 8.500L13 28l-9.500-8.500zM3 8Q11-2 22 7M22 1v7h-7" strokeLinejoin="round" /></Svg>,
              <Svg w={26} h={24}><path d="M13 0v24M1.500 6v12L8 12zM24.500 6v12L18 12z" strokeLinejoin="round" /></Svg>,
              <Svg w={24} h={26}><path d="M0 13h24M6 1.500h12L12 8zM6 24.500h12L12 18z" strokeLinejoin="round" /></Svg>,
            ]}
          />
        </div>
      </div>

      <div className="h-[638px] shrink-0 border-b-2 border-[#444] pl-8 pr-4">
        <Title
          icons={
            <div className="flex size-12 items-center justify-center rounded-[10px] bg-[#4d5872] text-[#8ac4f8]">
              <Svg w={26} h={26}>
                <rect x="2" y="1" width="8" height="23" rx="2" />
                <rect x="16" y="1" width="8" height="8" rx="2" />
                <path d="M15 18l4 4 6-6.500" />
              </Svg>
            </div>
          }
        >
          Auto layout
        </Title>
        <Label>Flow</Label>
        <div className="flex h-12 w-[368px] rounded-[10px] bg-[#383838] text-[#b8b8b8]">
          <div className="flex flex-1 items-center justify-center"><Svg w={24} h={24}><rect x="1" y="1" width="8" height="8" rx="2" /><rect x="15" y="5" width="8" height="8" rx="2" /><rect x="5" y="15" width="8" height="8" rx="2" /></Svg></div>
          <div className="flex flex-1 items-center justify-center rounded-[10px] border-2 border-[#444] bg-[#2c2c2c] text-white"><Svg w={24} h={24}><rect x="1" y="1" width="8" height="8" rx="2" /><rect x="1" y="15" width="8" height="8" rx="2" /><path d="M19 0v23M14 18l5 5 5-5" /></Svg></div>
          <div className="flex flex-1 items-center justify-center"><Svg w={24} h={24}><rect x="1" y="1" width="8" height="8" rx="2" /><rect x="15" y="1" width="8" height="8" rx="2" /><path d="M0 19h23M18 14l5 5-5 5" /></Svg></div>
          <div className="flex flex-1 items-center justify-center"><Svg w={24} h={24}><rect x="1" y="1" width="8" height="8" rx="2" /><rect x="15" y="1" width="8" height="8" rx="2" /><rect x="1" y="15" width="8" height="8" rx="2" /><rect x="15" y="15" width="8" height="8" rx="2" /></Svg></div>
        </div>
        <Label>Resizing</Label>
        <div className="flex gap-4">
          <Field icon="W" value="902" suffix="Fill" muted="text-[#b3b3b3]" />
          <Field icon="H" value="207" suffix="Hug" muted="text-[#b3b3b3]" />
          <Side><Svg w={24} h={24}><rect x="1" y="1" width="22" height="22" rx="2" /><path d="M7 11V7h5M17 13v4h-5" /></Svg></Side>
        </div>
        <div className="flex">
          <Label className="h-[52px] pt-[6px]">Alignment</Label>
          <Label className="h-[52px] pt-[6px]">Gap</Label>
        </div>
        <div className="flex gap-4">
          <div className="grid h-28 w-44 grid-cols-3 grid-rows-3 items-center justify-items-center rounded-[10px] bg-[#383838] px-[2px] py-[10px]">
            <Svg w={20} h={20} className="text-[#8ac4f8]" sw={4}><path d="M2 2h11M2 10h16M2 18h7" strokeLinecap="round" /></Svg>
            {Array.from({ length: 8 }, (_, i) => <span key={i} className="size-1 rounded-full bg-[#8a8a8a]" />)}
          </div>
          <div className="flex h-12 w-44 gap-[2px] overflow-hidden rounded-[10px]">
            <div className="flex w-[126px] items-center bg-[#383838] pl-[14px]">
              <Svg w={18} h={18} className="text-[#b3b3b3]"><path d="M0 0q0 2 2 2h14q2 0 2-2M4 9h10M0 18q0-2 2-2h14q2 0 2 2" /></Svg>
              <div className="ml-[14px] flex h-10 w-[47px] items-center justify-center rounded-lg border-2 border-[#444] bg-[#2c2c2c]">24</div>
            </div>
            <div className="flex flex-1 items-center justify-center bg-[#383838]"><Chevron /></div>
          </div>
          <Side><Svg w={24} h={24}><circle cx="5" cy="15" r="4" /><circle cx="19" cy="9" r="4" /><path d="M5 0v11M5 19v5M19 0v5M19 13v11" /></Svg></Side>
        </div>
        <Label className="h-[52px] pt-[6px]">Padding</Label>
        <div className="flex gap-4">
          <Field icon={<Svg w={20} h={20}><path d="M1 0v20M19 0v20" /><rect x="7" y="7" width="6" height="6" /></Svg>} value="0" />
          <Field icon={<Svg w={20} h={20}><path d="M0 1h20M0 19h20" /><rect x="7" y="7" width="6" height="6" /></Svg>} value="0" />
          <Side><Svg w={20} h={20}><path d="M4 1h12M4 19h12M1 4v12M19 4v12" /></Svg></Side>
        </div>
        <div className="mt-6 flex h-12 items-center">
          <div className="size-8 rounded-[10px] border-2 border-[#444] bg-[#383838]" />
          <span className="ml-4">Clip content</span>
        </div>
      </div>

      <div className="h-[206px] shrink-0 border-b-2 border-[#444] pl-8 pr-4">
        <Title
          icons={
            <div className="-mt-[2px] flex items-center pr-[13px]">
              <Svg w={26} h={27}><rect x="1" y="1" width="10" height="25" rx="4" /><circle cx="6" cy="20" r="1" /><path d="M11 6q5-3 9 0 3 4-1 8l-8 9M20 15q6 3 5 8-1 3-5 3h-8" /></Svg>
              <Svg w={28} h={20} className="ml-7"><path d="M1.500 10Q6 1.500 14 1.500T26.500 10Q22 18.500 14 18.500T1.500 10z" /><circle cx="14" cy="10" r="3" /></Svg>
              <Svg w={22} h={27} className="ml-[33px]"><path d="M11 1.500q9 8 9 15 0 9-9 9t-9-9q0-7 9-15z" /></Svg>
            </div>
          }
        >
          Appearance
        </Title>
        <div className="flex">
          <Label>Opacity</Label>
          <Label>Corner radius</Label>
        </div>
        <div className="flex gap-4">
          <Field icon={<Svg w={24} h={24} className="ml-1"><rect x="1" y="1" width="22" height="22" rx="3" /><path d="M5 18h14M9 14h10M13 10h6M17 6h2" strokeDasharray="2 2" strokeWidth="1.500" opacity=".7" /></Svg>} value="100%" />
          <Field icon={<Corners />} value="0" />
          <Side><Corners /></Side>
        </div>
      </div>

      <div className="shrink-0">
        <AddRow>Fill</AddRow>
        <AddRow>Stroke</AddRow>
        <AddRow>Effects</AddRow>
      </div>

      <div className="h-[234px] shrink-0 border-b-2 border-[#444] pl-8">
        <Title className="h-20">Selection colors</Title>
        <div className="mt-2 flex flex-col gap-4">
          <div className="flex h-12 w-[312px] items-center rounded-[10px] border-2 border-[#444] pl-2">
            <span className="size-8 rounded-lg border-2 border-[#2b3b45] bg-[#142833]" />
            <span className="ml-2">foreground</span>
          </div>
          <div className="flex h-12 w-[312px] items-center rounded-[10px] border-2 border-[#444] pl-2">
            <span className="size-8 rounded-lg bg-[#3063e9]" />
            <span className="ml-2">foreground-accent</span>
          </div>
        </div>
      </div>
      <div className="flex h-20 shrink-0 items-center justify-between pl-8 pr-7 text-[#b3b3b3]">
        <span className="font-medium">Layout guide</span>
        <Plus />
      </div>
      <div className="absolute right-12 top-[1948px] flex size-16 items-center justify-center rounded-full bg-[#1e1e1e] text-[34px] leading-none">?</div>
    </aside>
  );
}

export default function App() {
  return (
    <div className="h-[2124px] w-[3420px] overflow-hidden bg-black font-['Inter',sans-serif]">
      <div className="relative flex h-full flex-col overflow-hidden rounded-[20px]">
        <TopBar />
        <div className="flex h-[2054px]">
          <LeftSidebar />
          <Canvas />
          <RightSidebar />
        </div>
        <div className="pointer-events-none absolute inset-0 rounded-[20px] border-2 border-white/20" />
      </div>
    </div>
  );
}
